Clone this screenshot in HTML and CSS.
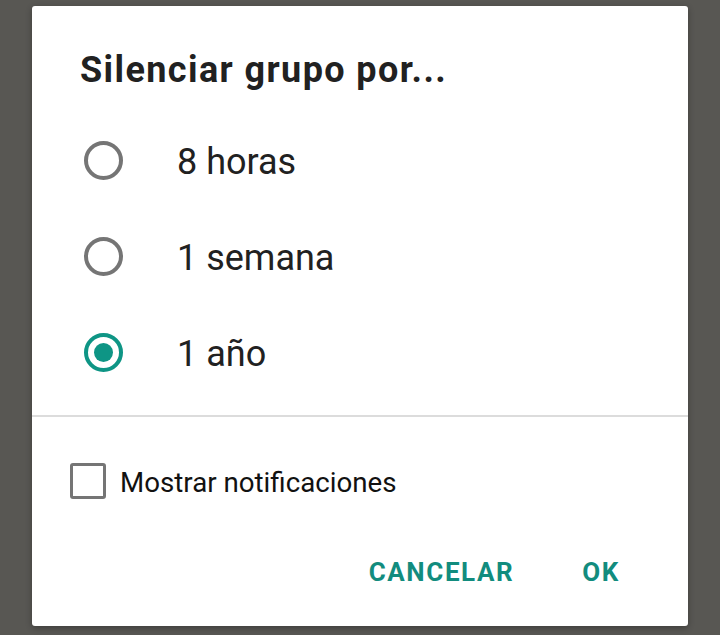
FILE: index.html
```html
<!DOCTYPE html>
<html lang="es">
<head>
    <meta charset="UTF-8">
    <meta name="viewport" content="width=device-width, initial-scale=1.0">
    <title>Silenciar grupo</title>
    <link rel="stylesheet" href="styles.css">
</head>
<body>
    <div class="dialog">
        <h1 class="title">Silenciar grupo por...</h1>

        <!-- Duration options -->
        <div class="options">
            <label class="option">
                <span class="radio"></span>
                <span class="option-text">8 horas</span>
            </label>
            <label class="option">
                <span class="radio"></span>
                <span class="option-text">1 semana</span>
            </label>
            <label class="option">
                <span class="radio checked"></span>
                <span class="option-text">1 año</span>
            </label>
        </div>

        <div class="divider"></div>

        <label class="check-row">
            <span class="checkbox"></span>
            <span class="check-text">Mostrar notificaciones</span>
        </label>

        <div class="actions">
            <button class="action">CANCELAR</button>
            <button class="action">OK</button>
        </div>
    </div>
</body>
</html>
```

FILE: styles.css
```css
/* Mute dialog over the dimmed chat */
body {
    margin: 0;
    padding: 6px 32px 9px 32px;
    background-color: #585753;
    font-family: Roboto, "Noto Sans", Arial, sans-serif;
}

.dialog {
    background-color: #fff;
    border-radius: 3px;
    height: 620px;
    display: flex;
    flex-direction: column;
    box-shadow: 0 2px 6px rgba(0, 0, 0, 0.3);
}

.title {
    margin: 42px 0 20px 48px;
    font-size: 36px;
    line-height: 44px;
    font-weight: 700;
    letter-spacing: 1.4px;
    color: #212121;
}

.options {
    display: flex;
    flex-direction: column;
}

.option {
    height: 96px;
    display: flex;
    align-items: center;
    padding-left: 52px;
}

.radio {
    width: 39px;
    height: 39px;
    box-sizing: border-box;
    border: 4px solid #757575;
    border-radius: 50%;
    display: flex;
    align-items: center;
    justify-content: center;
}

.radio.checked {
    border-color: #0e9585;
}

.radio.checked::after {
    content: "";
    width: 19px;
    height: 19px;
    border-radius: 50%;
    background-color: #0e9585;
}

.option-text {
    margin-left: 54px;
    padding-top: 3px;
    font-size: 36px;
    color: #212121;
}

.divider {
    height: 2px;
    background-color: #dcdcdc;
    margin-top: 15px;
}

.check-row {
    height: 64px;
    margin-top: 32px;
    display: flex;
    align-items: center;
    padding-left: 38px;
}

.checkbox {
    width: 36px;
    height: 36px;
    box-sizing: border-box;
    border: 3px solid #757575;
    border-radius: 3px;
}

.check-text {
    margin-left: 14px;
    padding-top: 3px;
    font-size: 27.7px;
    color: #111;
}

.actions {
    display: flex;
    justify-content: flex-end;
    align-items: center;
    height: 48px;
    margin-top: 35px;
    padding-right: 68px;
    gap: 68px;
}

.action {
    background: none;
    border: none;
    padding: 0;
    font-family: inherit;
    font-size: 26px;
    font-weight: 700;
    letter-spacing: 1.6px;
    color: #128c7e;
}
```
